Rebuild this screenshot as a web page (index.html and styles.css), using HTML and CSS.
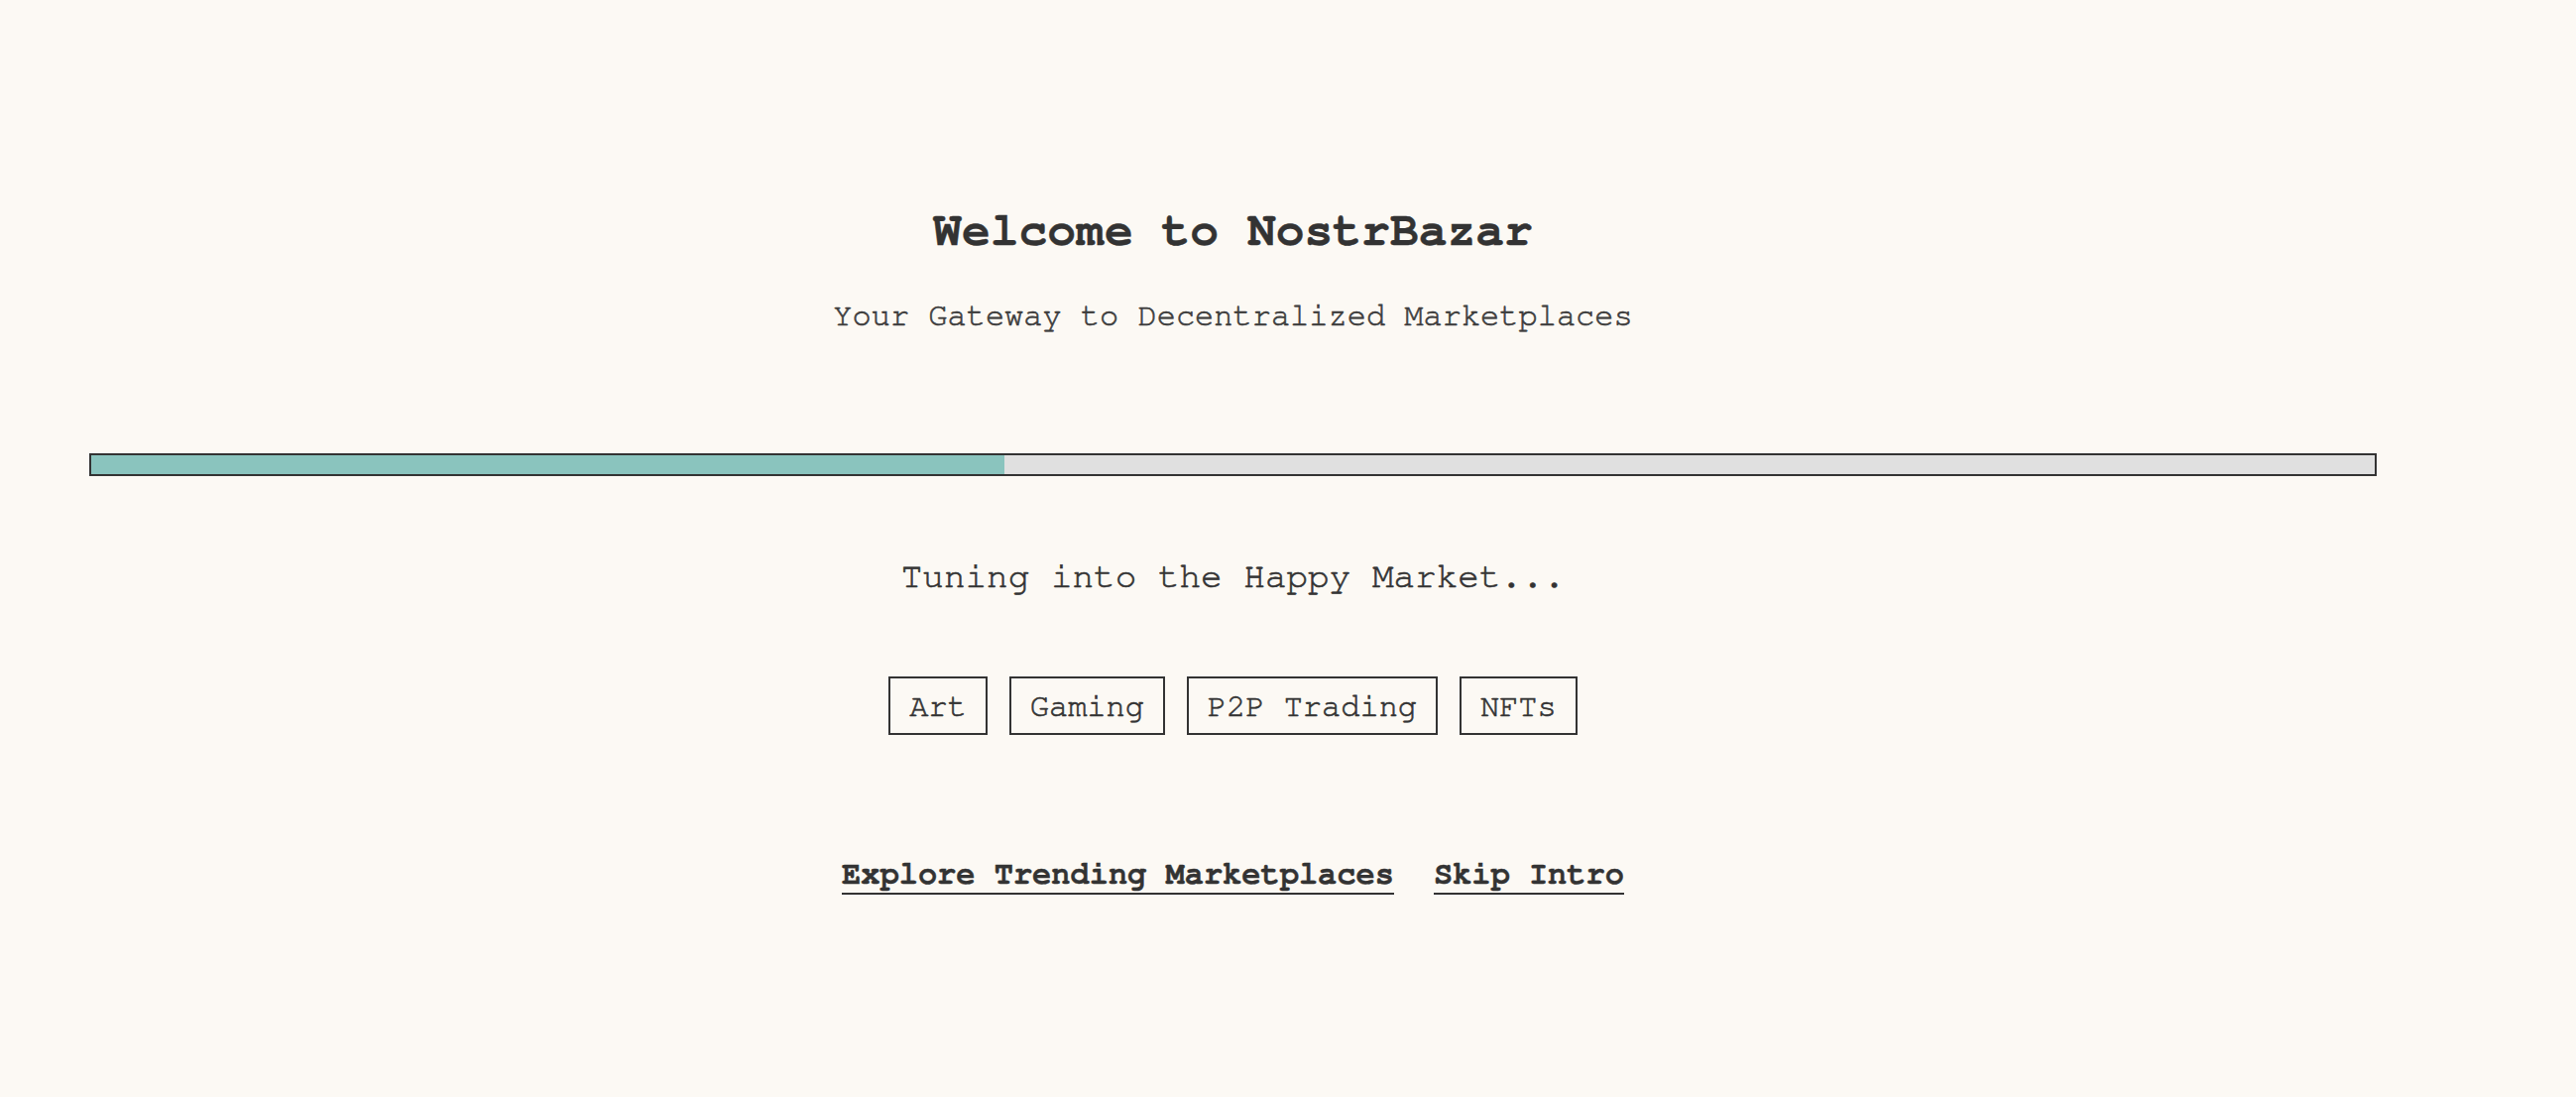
FILE: index.html
```html
<!DOCTYPE html>
<html lang="en">
<head>
<meta charset="utf-8">
<title>NostrBazar</title>
<link rel="stylesheet" href="styles.css">
</head>
<body>
<main class="page">
  <h1 class="title">Welcome to NostrBazar</h1>
  <p class="subtitle">Your Gateway to Decentralized Marketplaces</p>
  <div class="progress"><div class="progress-fill" style="width: 40%"></div></div>
  <p class="status">Tuning into the Happy Market...</p>
  <div class="tags">
    <span class="tag">Art</span>
    <span class="tag">Gaming</span>
    <span class="tag">P2P Trading</span>
    <span class="tag">NFTs</span>
  </div>
  <nav class="links">
    <a class="link" href="#">Explore Trending Marketplaces</a>
    <a class="link" href="#">Skip Intro</a>
  </nav>
</main>
</body>
</html>
```
FILE: styles.css
```css
html, body {
  margin: 0;
  padding: 0;
}
body {
  background: #fcf9f4;
  color: #333333;
  font-family: "Nimbus Mono PS", "Nimbus Mono L", "FreeMono", "Courier 10 Pitch", "Liberation Mono", monospace;
  width: 2598px;
  height: 1106px;
  overflow: hidden;
}
.page {
  width: 2307px;
  margin-left: 90px;
  padding-top: 206px;
  display: flex;
  flex-direction: column;
  align-items: center;
  text-align: center;
}
.title {
  margin: 0;
  font-size: 48px;
  font-weight: bold;
  line-height: 54.4px;
  color: #333333;
  -webkit-text-stroke: 0.4px #333333;
}
.subtitle {
  margin: 40px 0 0;
  font-size: 32px;
  line-height: 36.25px;
  color: #3c3c3c;
  -webkit-text-stroke: 0.6px #3c3c3c;
}
.progress {
  box-sizing: border-box;
  width: 100%;
  height: 23px;
  margin-top: 120.5px;
  border: 2px solid #333333;
  background: #e0e0e0;
}
.progress-fill {
  height: 100%;
  background: #8ac4be;
}
.status {
  margin: 81px 0 0;
  font-size: 36px;
  line-height: 40.8px;
  color: #333333;
  -webkit-text-stroke: 0.6px #333333;
}
.tags {
  margin-top: 80px;
  display: flex;
  gap: 21.5px;
  justify-content: center;
}
.tag {
  font-size: 32px;
  line-height: 36.25px;
  padding: 9.6px 19.2px;
  border: 2px solid #333333;
  color: #333333;
  -webkit-text-stroke: 0.6px #333333;
}
.links {
  margin-top: 122px;
  display: flex;
  gap: 40px;
  justify-content: center;
}
.link {
  font-size: 32px;
  font-weight: bold;
  line-height: 36.25px;
  color: #333333;
  text-decoration: none;
  border-bottom: 2px solid #333333;
  -webkit-text-stroke: 0.4px #333333;
}
```
